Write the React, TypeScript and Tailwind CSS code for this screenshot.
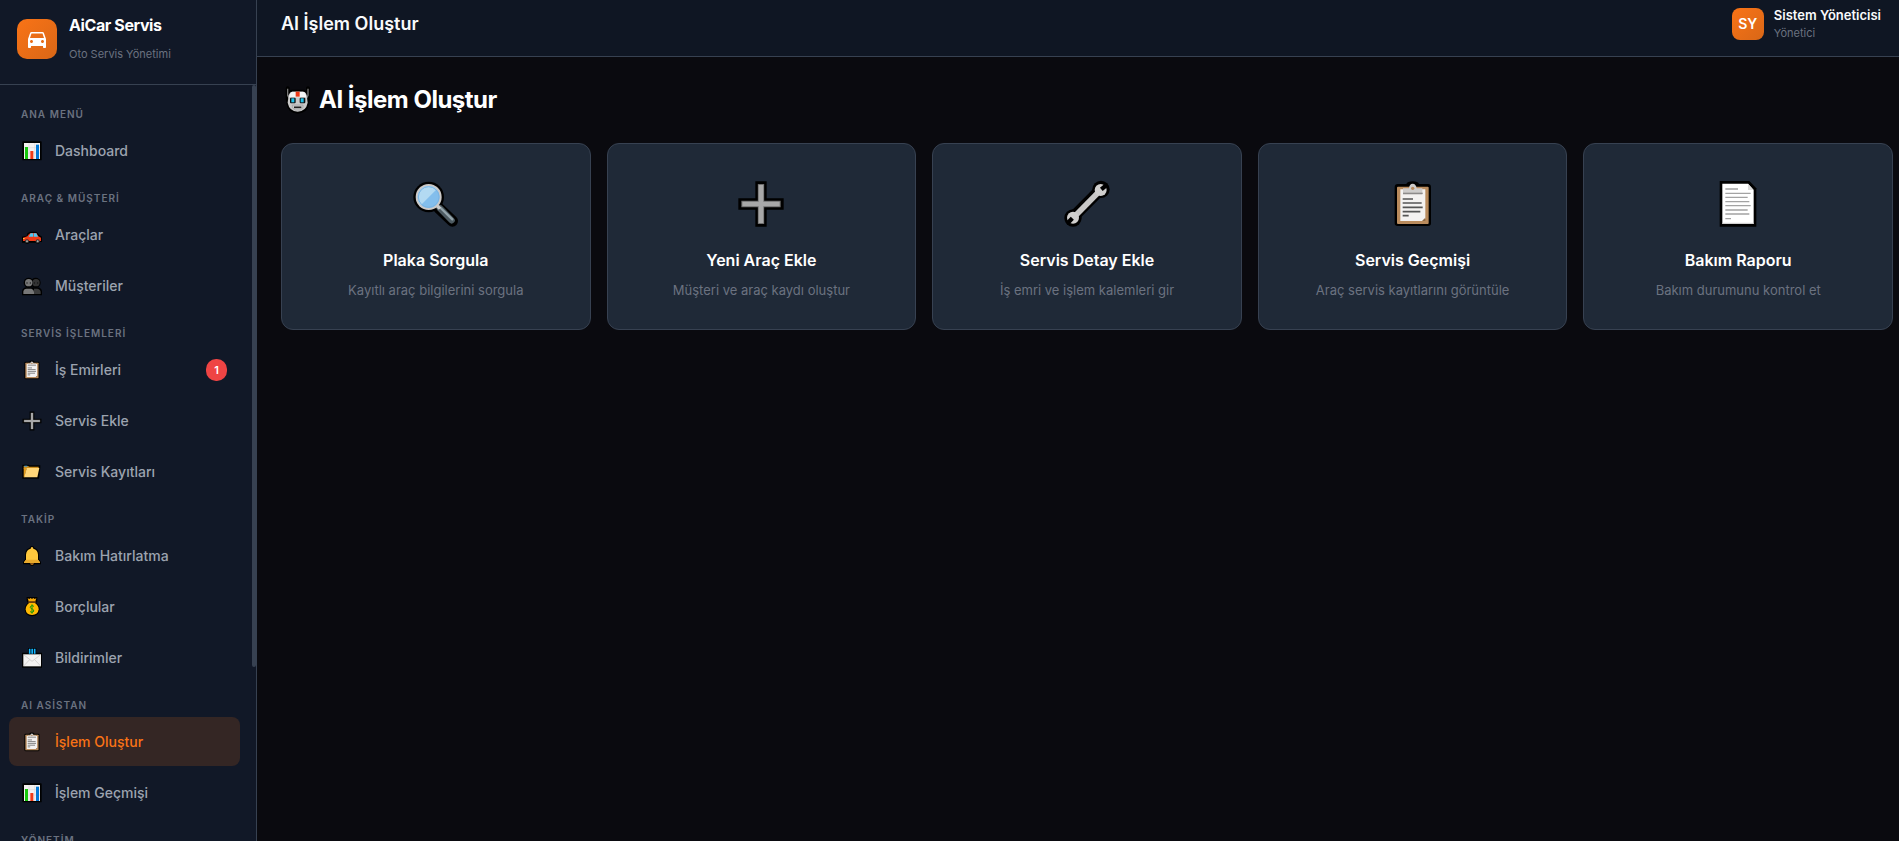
import type { ReactNode } from 'react';

type IconProps = { className: string };

const svg = (size: number, children: ReactNode) =>
  function Icon({ className }: IconProps) {
    return (
      <svg viewBox={`0 0 ${size} ${size}`} className={className} aria-hidden="true">
        {children}
      </svg>
    );
  };

const Magnifier = svg(
  144,
  <>
    <path d="M80 84 121 123" stroke="#000" strokeWidth="34" strokeLinecap="round" />
    <circle cx="50" cy="51" r="46" fill="#000" />
    <path d="M83 84 119 121" stroke="#4d5a61" strokeWidth="19" strokeLinecap="round" />
    <path d="M86 84 121 118" stroke="#93a3aa" strokeWidth="7" strokeLinecap="round" />
    <path d="M76 78 84 86" stroke="#c9ccce" strokeWidth="10" />
    <circle cx="50" cy="51" r="39" fill="#cbc9c8" />
    <circle cx="50" cy="51" r="33" fill="#83beec" />
    <path d="M27 75A33 33 0 1 1 74 28Z" fill="#b3daf2" />
    <circle cx="50" cy="51" r="31" fill="none" stroke="#79b4e4" strokeWidth="3" />
  </>,
);

const Plus = svg(
  144,
  <>
    <path d="M72 4V140M4 72H140" stroke="#000" strokeWidth="34" />
    <path d="M72 12V132M13 72H131" stroke="#6e6e6e" strokeWidth="19" />
    <path d="M72 15V129M16 72H128" stroke="#a8a8a8" strokeWidth="14" />
  </>,
);

const Wrench = svg(
  144,
  <>
    <path d="M112 29 30 112" stroke="#000" strokeWidth="34" />
    <circle cx="114" cy="28" r="26" fill="#000" />
    <circle cx="30" cy="114" r="26" fill="#000" />
    <path d="M110 33 34 110" stroke="#c8c7c6" strokeWidth="17" />
    <circle cx="113" cy="30" r="18" fill="#d0cfce" />
    <circle cx="30" cy="113" r="18" fill="#d0cfce" />
    <path d="M115 28 132 14M28 115 12 131" stroke="#000" strokeWidth="13" />
  </>,
);

const Clipboard = svg(
  144,
  <>
    <path d="M26 12H52Q55 4 71 4T90 12H117Q126 12 126 21V130Q126 138 117 138H26Q17 138 17 130V21Q17 12 26 12Z" fill="#000" />
    <rect x="24" y="20" width="95" height="112" rx="3" fill="#b98b5d" />
    <path d="M34 28H109V115L101 123H34Z" fill="#f4f2f1" />
    <path d="M109 113V123H99Z" fill="#8f6b47" />
    <path d="M42 25H60Q61 11 71 11T83 25H100V44H42Z" fill="#cfcdcc" />
    <path d="M42 40H101" stroke="#8d8b8a" strokeWidth="4" />
    <circle cx="71" cy="25" r="5" fill="#b98b5d" />
    <path d="M41 57H72M41 69H98M41 82H101M41 95H94M41 107H59" stroke="#555" strokeWidth="5" />
  </>,
);

const Document = svg(
  144,
  <>
    <path d="M17 3H106L127 25V140H17Z" fill="#000" />
    <path d="M25 11H102L119 30V132H25Z" fill="#fff" />
    <path d="M102 11 119 30H102Z" fill="#dcdcdc" />
    <path d="M25 130H119" stroke="#c8c8c8" strokeWidth="3" />
    <path d="M34 27H72M34 40H110M34 52H101M34 65H106M34 77H110M34 90H101M34 102H106M34 116H51" stroke="#a3a3a3" strokeWidth="4" />
  </>,
);

const Robot = svg(
  96,
  <>
    <path d="M20 13V48M81 13V48" stroke="#000" strokeWidth="12" strokeLinecap="round" />
    <path d="M33 17H68Q78 17 81 28L85 58Q80 88 50 89Q20 88 16 58L19 28Q23 17 33 17Z" fill="#000" />
    <path d="M20 14V34L25 44M81 14V34L76 44" fill="none" stroke="#777" strokeWidth="4" />
    <path d="M34 23H66Q75 24 77 34L80 56Q75 82 50 83Q25 82 20 56L23 34Q26 24 34 23Z" fill="#c9c9c9" />
    <path d="M34 23H66Q74 24 76 40H24Q27 24 34 23Z" fill="#f4f4f4" />
    <rect x="44" y="23" width="12" height="15" fill="#f03a17" />
    <rect x="27" y="41" width="17" height="17" rx="3" fill="#111" />
    <rect x="56" y="41" width="17" height="17" rx="3" fill="#111" />
    <rect x="31" y="43" width="9" height="12" fill="#20c0e8" />
    <rect x="59" y="43" width="9" height="12" fill="#20c0e8" />
    <path d="M39 70H61" stroke="#222" strokeWidth="5" />
    <path d="M34 63H66M34 63V71L42 78H58L66 71V63" fill="none" stroke="#9b9b9b" strokeWidth="2" />
  </>,
);

const BarChart = svg(
  60,
  <>
    <rect x="1" y="1" width="58" height="57" rx="2" fill="#000" />
    <rect x="6" y="6" width="48" height="48" fill="#f4f1f1" />
    <path d="M6 20H54M6 36H54M21 6V54M38 6V54" stroke="#dcd9d9" strokeWidth="2" />
    <rect x="9" y="18" width="9" height="36" fill="#16c60c" />
    <rect x="25" y="30" width="9" height="24" fill="#f03a17" />
    <rect x="42" y="11" width="9" height="43" fill="#0078d7" />
  </>,
);

const Car = svg(
  60,
  <>
    <path d="M16 25 24 20H43L52 30 60 35V51H54Q48 61 42 53H22Q15 61 9 53H0V35L14 32Z" fill="#000" />
    <path d="M19 29 25 24H43L49 34 57 38V48H3V38L16 34Z" fill="#f03a17" />
    <path d="M20 35 26 25H33V35ZM35 25H43L48 35H35Z" fill="#4cc9f5" />
    <circle cx="15" cy="49" r="6" fill="#333" />
    <circle cx="47" cy="49" r="6" fill="#333" />
    <circle cx="15" cy="49" r="3" fill="#aaa" />
    <circle cx="47" cy="49" r="3" fill="#aaa" />
    <path d="M3 39H8V42H3Z" fill="#ffc83d" />
  </>,
);

const People = svg(
  60,
  <>
    <circle cx="41" cy="20" r="15" fill="#000" />
    <circle cx="20" cy="20" r="15" fill="#000" />
    <path d="M0 58V46Q2 35 13 34H47Q58 35 60 46V58Z" fill="#000" />
    <circle cx="42" cy="20" r="11" fill="#333" />
    <circle cx="20" cy="20" r="11" fill="#777" />
    <path d="M36 54V38H46Q56 40 56 48V54Z" fill="#3b3b3b" />
    <path d="M4 54V47Q5 38 14 38H28Q36 40 36 48V54Z" fill="#777" />
    <path d="M15 19V23M25 19V23M37 19V23M47 19V23" stroke="#111" strokeWidth="3" />
  </>,
);

const Folder = svg(
  60,
  <>
    <path d="M1 8H20L24 10H55V17L51 50H1Z" fill="#000" />
    <path d="M5 12H18L22 14H50V20H5Z" fill="#c98a1b" />
    <path d="M7 11H16V14H7Z" fill="#2f9be6" />
    <path d="M5 18H14L8 46H5Z" fill="#e19a1c" />
    <path d="M14 18H52L46 46H7Z" fill="#ffd679" />
  </>,
);

const Bell = svg(
  60,
  <>
    <path d="M30 0Q36 0 37 5Q50 9 51 25V40L57 48V55H38Q36 60 30 60T22 55H3V48L9 40V25Q10 9 23 5Q24 0 30 0Z" fill="#000" />
    <path d="M30 3Q34 3 34 8Q47 11 48 26V41L54 49V51H6V49L12 41V26Q13 11 26 8Q26 3 30 3Z" fill="#ffc83d" />
    <path d="M12 41H48L54 49V51H6V49Z" fill="#e8a92c" />
    <path d="M24 52H36Q35 57 30 57T24 52Z" fill="#b5701e" />
  </>,
);

const MoneyBag = svg(
  60,
  <>
    <path d="M14 0H46V14L42 18Q53 25 53 37Q52 57 30 58Q9 57 8 37Q8 25 18 18L14 12Z" fill="#000" />
    <path d="M17 4 22 6 26 3 30 6 34 3 38 6 43 4 40 13H20Z" fill="#f5a80a" />
    <path d="M19 13H41V17H19Z" fill="#a4610f" />
    <path d="M21 18H39Q50 26 50 37Q48 54 30 54T11 37Q11 26 21 18Z" fill="#ffb902" />
    <path d="M36 29Q34 26 30 26Q24 27 25 32Q26 35 31 36Q36 38 35 42Q34 46 30 46Q26 46 24 43M30 22V50" fill="none" stroke="#13960c" strokeWidth="3" />
  </>,
);

const Mail = svg(
  60,
  <>
    <path d="M18 0H43V14H60V59H0V14H18Z" fill="#000" />
    <path d="M23 2V17M30.500 2V17M38 2V17" stroke="#12b4ff" strokeWidth="5" />
    <rect x="4" y="19" width="53" height="36" fill="#f4f2f1" />
    <path d="M5 20 30 40 56 20M5 54 23 35M56 54 38 35" fill="none" stroke="#c5c3c2" strokeWidth="2" />
  </>,
);

type NavItem = {
  label: string;
  Icon: (props: IconProps) => ReactNode;
  badge?: number;
  active?: boolean;
};

const sections: { title: string; items: NavItem[] }[] = [
  { title: 'ANA MENÜ', items: [{ label: 'Dashboard', Icon: BarChart }] },
  {
    title: 'ARAÇ & MÜŞTERİ',
    items: [
      { label: 'Araçlar', Icon: Car },
      { label: 'Müşteriler', Icon: People },
    ],
  },
  {
    title: 'SERVİS İŞLEMLERİ',
    items: [
      { label: 'İş Emirleri', Icon: Clipboard, badge: 1 },
      { label: 'Servis Ekle', Icon: Plus },
      { label: 'Servis Kayıtları', Icon: Folder },
    ],
  },
  {
    title: 'TAKİP',
    items: [
      { label: 'Bakım Hatırlatma', Icon: Bell },
      { label: 'Borçlular', Icon: MoneyBag },
      { label: 'Bildirimler', Icon: Mail },
    ],
  },
  {
    title: 'AI ASİSTAN',
    items: [
      { label: 'İşlem Oluştur', Icon: Clipboard, active: true },
      { label: 'İşlem Geçmişi', Icon: BarChart },
    ],
  },
  { title: 'YÖNETİM', items: [] },
];

const actions = [
  { title: 'Plaka Sorgula', text: 'Kayıtlı araç bilgilerini sorgula', Icon: Magnifier },
  { title: 'Yeni Araç Ekle', text: 'Müşteri ve araç kaydı oluştur', Icon: Plus },
  { title: 'Servis Detay Ekle', text: 'İş emri ve işlem kalemleri gir', Icon: Wrench },
  { title: 'Servis Geçmişi', text: 'Araç servis kayıtlarını görüntüle', Icon: Clipboard },
  { title: 'Bakım Raporu', text: 'Bakım durumunu kontrol et', Icon: Document },
];

function Sidebar() {
  return (
    <aside className="flex w-[257px] shrink-0 flex-col border-r border-[#374151] bg-[#111827]">
      <div className="flex shrink-0 gap-3 border-b border-[#374151] px-[17px] pt-[13px] pb-[21px]">
        <div className="mt-1.5 flex size-10 items-center justify-center rounded-[10px] bg-linear-135 from-[#f97316] to-[#d96717]">
          <svg viewBox="0 0 24 24" className="size-6 fill-white" aria-hidden="true">
            <path d="M18.92 6.01C18.72 5.42 18.16 5 17.5 5h-11c-.66 0-1.21.42-1.42 1.01L3 12v8c0 .55.45 1 1 1h1c.55 0 1-.45 1-1v-1h12v1c0 .55.45 1 1 1h1c.55 0 1-.45 1-1v-8l-2.080-5.990zM6.500 16c-.83 0-1.500-.67-1.500-1.500S5.670 13 6.500 13s1.500.67 1.500 1.500S7.330 16 6.500 16zm11 0c-.83 0-1.500-.67-1.500-1.500s.67-1.500 1.500-1.500 1.500.67 1.500 1.500-.67 1.500-1.500 1.500zM5 11l1.500-4.500h11L19 11H5z" />
          </svg>
        </div>
        <div>
          <p className="text-base leading-6 font-bold tracking-tight text-white">AiCar Servis</p>
          <p className="mt-2 text-[11px] leading-[18px] text-[#6b7280]">Oto Servis Yönetimi</p>
        </div>
      </div>
      <div className="flex min-h-0 flex-1">
        <nav className="flex min-w-0 flex-1 flex-col gap-4 overflow-hidden pt-[22px] pr-3 pl-[9px]">
          {sections.map((section) => (
            <section key={section.title} className="shrink-0">
              <h3 className="mb-1 px-3 text-[10px] leading-[15px] font-semibold tracking-[1px] text-[#6b7280]">
                {section.title}
              </h3>
              <ul className="flex flex-col gap-0.5">
                {section.items.map(({ label, Icon, badge, active }) => (
                  <li key={label}>
                    <a
                      href="#"
                      aria-current={active ? 'page' : undefined}
                      className={`flex h-[49px] items-center gap-[13px] rounded-lg px-[13px] text-sm font-medium ${
                        active ? 'bg-[#342624] text-[#f97316]' : 'text-[#9ca3af]'
                      }`}
                    >
                      <Icon className="size-5" />
                      <span className="flex-1">{label}</span>
                      {badge && (
                        <span className="rounded-[10px] bg-[#ef4444] px-2 py-0.5 text-[11px] leading-[18px] font-semibold text-white">
                          {badge}
                        </span>
                      )}
                    </a>
                  </li>
                ))}
              </ul>
            </section>
          ))}
        </nav>
        <div className="w-1 shrink-0" aria-hidden="true">
          <div className="h-[77%] w-full rounded-xs bg-[#374151]" />
        </div>
      </div>
    </aside>
  );
}

export default function App() {
  return (
    <div className="flex h-screen overflow-hidden bg-[#0a0a0f] font-[Inter,'Noto_Sans',sans-serif]">
      <Sidebar />
      <div className="flex min-w-0 flex-1 flex-col">
        <header className="flex items-start justify-between border-b border-[#374151] bg-[#0f1623] pt-1.5 pr-[18px] pb-3.5 pl-6">
          <h2 className="py-1 text-lg leading-7 font-semibold text-[#f9fafb]">AI İşlem Oluştur</h2>
          <div className="flex items-center gap-2.5">
            <div className="flex size-8 items-center justify-center rounded-lg bg-linear-135 from-[#f97316] to-[#d96717] text-sm font-semibold text-white">
              SY
            </div>
            <div>
              <p className="text-[13px] leading-[18px] font-semibold text-[#f9fafb]">Sistem Yöneticisi</p>
              <p className="text-[11px] leading-[18px] text-[#6b7280]">Yönetici</p>
            </div>
          </div>
        </header>
        <main className="flex-1 pt-6 pr-1.5 pl-6">
          <h1 className="flex items-center gap-1.5 text-2xl leading-[38px] font-bold tracking-[-0.5px] text-white">
            <Robot className="size-8" />
            AI İşlem Oluştur
          </h1>
          <div className="mt-6 grid grid-cols-5 gap-4">
            {actions.map(({ title, text, Icon }) => (
              <button
                key={title}
                type="button"
                className="flex flex-col items-center rounded-xl border border-[#374151] bg-[#1f2937] px-6 pt-9 pb-7"
              >
                <Icon className="size-12" />
                <span className="mt-5 text-base leading-6 font-semibold text-white">{title}</span>
                <span className="mt-2 text-[13px] leading-[21px] text-[#6b7280]">{text}</span>
              </button>
            ))}
          </div>
        </main>
      </div>
    </div>
  );
}
